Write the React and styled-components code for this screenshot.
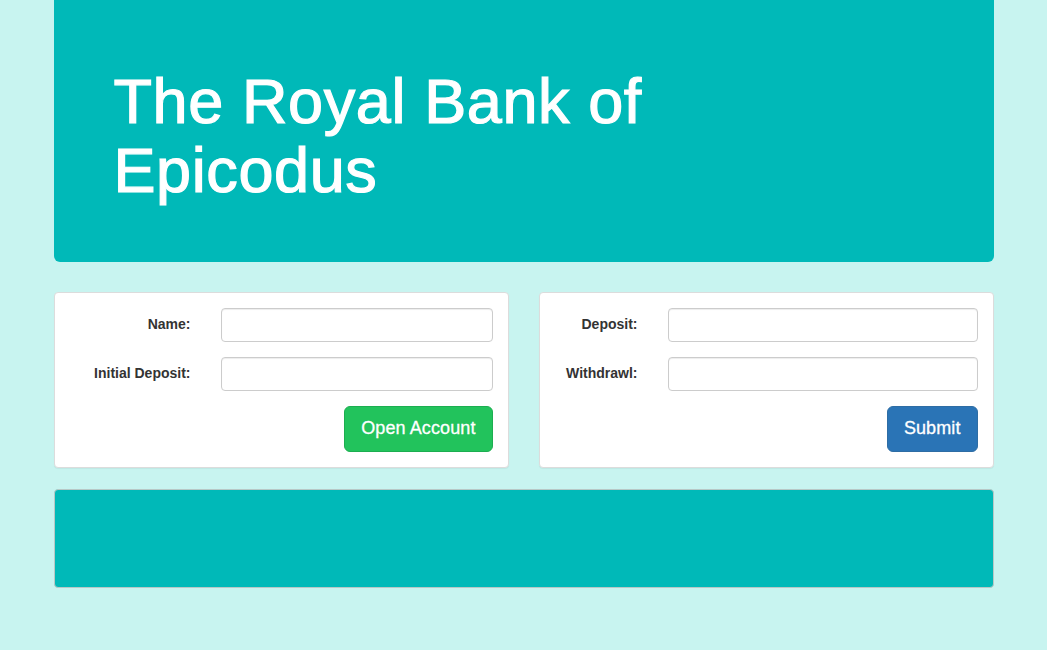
import React from "react";
import styled, { createGlobalStyle } from "styled-components";

const Global = createGlobalStyle`
  html, body { margin: 0; padding: 0; }
  body {
    background: #c8f4f0;
    font-family: "Liberation Sans", Arial, Helvetica, sans-serif;
    font-size: 14px;
    line-height: 1.42857;
    color: #333;
  }
  * { box-sizing: border-box; }
`;

const Container = styled.div`
  width: 970px;
  padding: 0 15px;
  margin: 0 auto;
`;

const Jumbotron = styled.header`
  background: #00b9b8;
  border-radius: 0 0 6px 6px;
  padding: 47px 60px 46px;
  margin-bottom: 30px;
`;

const Title = styled.h1`
  margin: 20px 0 10px;
  max-width: 700px;
  font-size: 63px;
  line-height: 1.1;
  font-weight: 400;
  letter-spacing: 0.6px;
  -webkit-text-stroke: 1.2px #fff;
  color: #fff;
`;

const Row = styled.div`
  display: grid;
  grid-template-columns: 1fr 1fr;
  gap: 30px;
`;

const Panel = styled.section`
  background: #fff;
  border: 1px solid #dcdcdc;
  border-radius: 4px;
  box-shadow: 0 1px 1px rgba(0, 0, 0, 0.05);
  padding: 15px 0;
  margin-bottom: 20px;
`;

const FormGroup = styled.div`
  display: grid;
  grid-template-columns: ${(p) => p.$label}px 1fr;
  margin-bottom: ${(p) => (p.$last ? 0 : 15)}px;
`;

const Label = styled.label`
  padding: 7px 15px 0;
  text-align: right;
  font-weight: 700;
  font-size: 14px;
  color: #333;
`;

const Field = styled.div`
  padding: 0 15px;
  display: flex;
  justify-content: flex-end;
`;

const Input = styled.input`
  display: block;
  width: 100%;
  height: 34px;
  padding: 6px 12px;
  border: 1px solid #ccc;
  border-radius: 4px;
  box-shadow: inset 0 1px 1px rgba(0, 0, 0, 0.075);
  font-family: inherit;
  font-size: 14px;
  background: #fff;
`;

const Button = styled.button`
  height: 46px;
  padding: 10px 16px;
  font-family: "Liberation Sans", Arial, sans-serif;
  font-size: 18px;
  line-height: 1.3333;
  letter-spacing: 0.1px;
  -webkit-text-stroke: 0.3px #fff;
  color: #fff;
  border-radius: 6px;
  border: 1px solid ${(p) => (p.$variant === "success" ? "#1cae50" : "#2e6da4")};
  background: ${(p) => (p.$variant === "success" ? "#22c35c" : "#2a74b6")};
  cursor: pointer;
`;

const Well = styled.div`
  background: #00b9b8;
  border: 1px solid #b8c8c6;
  border-radius: 4px;
  height: 99px;
  margin-top: 1px;
`;

export default function App() {
  return (
    <>
      <Global />
      <Container>
        <Jumbotron>
          <Title>The Royal Bank of Epicodus</Title>
        </Jumbotron>
        <Row>
          <Panel>
            <FormGroup $label={151}>
              <Label>Name:</Label>
              <Field><Input type="text" /></Field>
            </FormGroup>
            <FormGroup $label={151}>
              <Label>Initial Deposit:</Label>
              <Field><Input type="text" /></Field>
            </FormGroup>
            <FormGroup $label={151} $last>
              <span />
              <Field><Button $variant="success">Open Account</Button></Field>
            </FormGroup>
          </Panel>
          <Panel>
            <FormGroup $label={113}>
              <Label>Deposit:</Label>
              <Field><Input type="text" /></Field>
            </FormGroup>
            <FormGroup $label={113}>
              <Label>Withdrawl:</Label>
              <Field><Input type="text" /></Field>
            </FormGroup>
            <FormGroup $label={113} $last>
              <span />
              <Field><Button $variant="primary">Submit</Button></Field>
            </FormGroup>
          </Panel>
        </Row>
        <Well />
      </Container>
    </>
  );
}
